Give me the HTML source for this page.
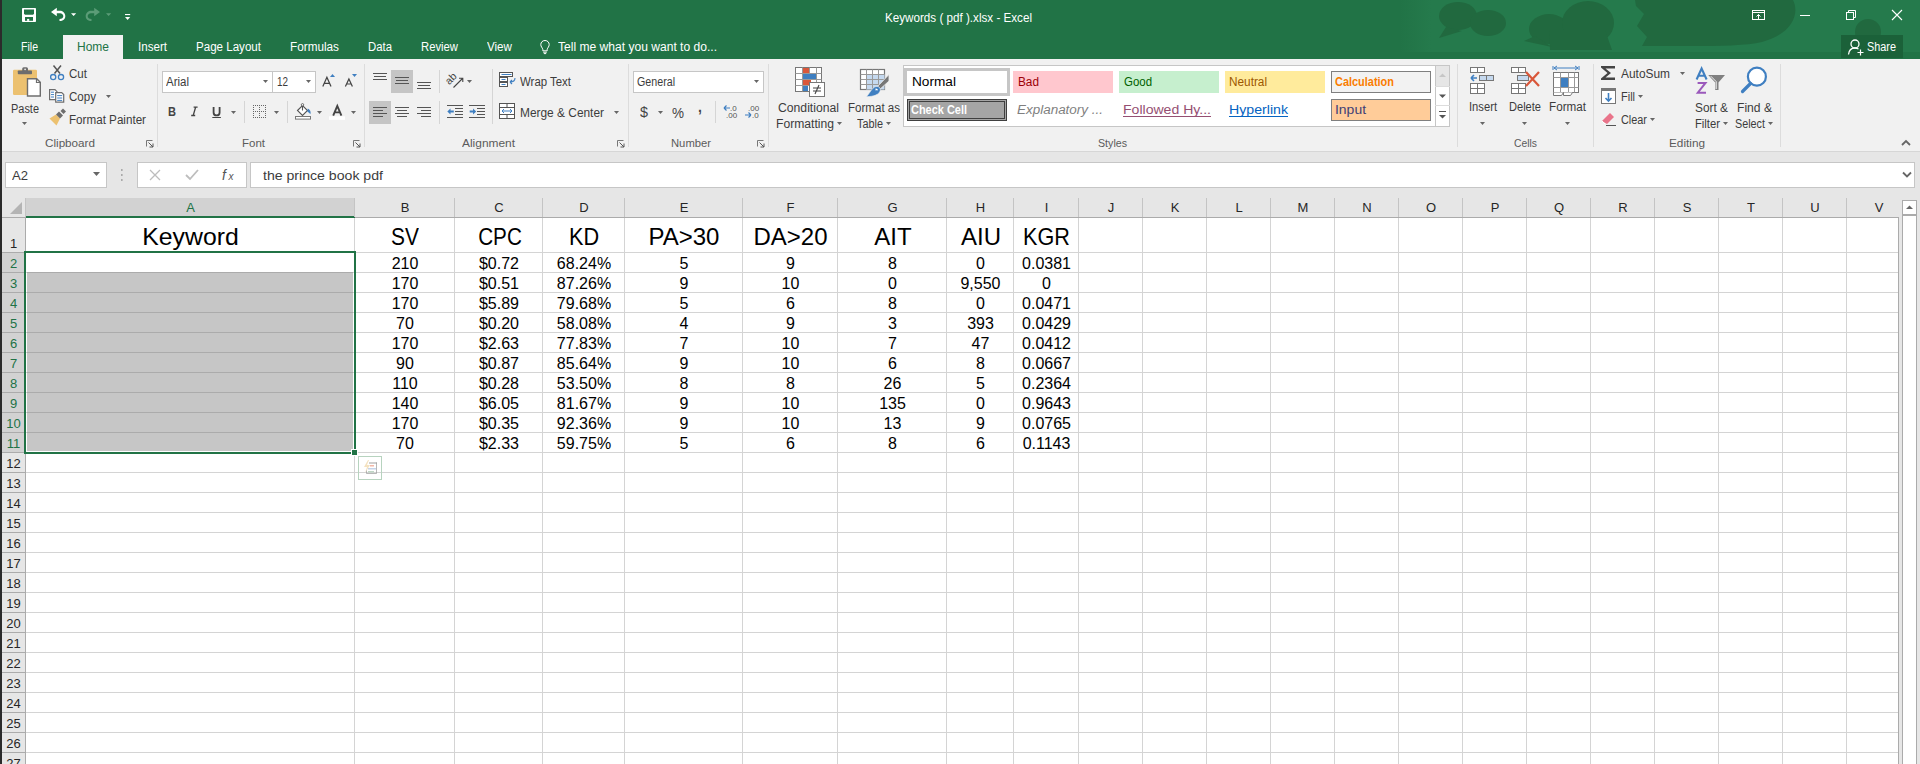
<!DOCTYPE html>
<html><head><meta charset="utf-8"><title>Keywords ( pdf ).xlsx - Excel</title>
<style>
*{margin:0;padding:0;box-sizing:border-box}
html,body{width:1920px;height:764px;overflow:hidden;background:#fff;font-family:"Liberation Sans",sans-serif}
.a{position:absolute}
svg.a{overflow:visible}
.t{position:absolute;height:0;line-height:0;white-space:nowrap}
.t span{display:inline-block;line-height:0;vertical-align:baseline}
</style></head><body>
<div class="a" style="left:0px;top:0px;width:1920px;height:59px;background:#217346"></div>
<svg class="a" style="left:0;top:0" width="1920" height="59" viewBox="0 0 1920 59"><defs><linearGradient id="tg" x1="0" x2="1" y1="0" y2="0"><stop offset="0" stop-color="#257a4c" stop-opacity="0"/><stop offset="0.06" stop-color="#257a4c" stop-opacity="1"/></linearGradient></defs><rect x="1400" y="0" width="520" height="52" fill="url(#tg)"/><g fill="#21693f"><ellipse cx="1458" cy="16" rx="19" ry="14"/><ellipse cx="1488" cy="23" rx="18" ry="13"/><path d="M1446 27L1439 38L1462 31z"/><ellipse cx="1549" cy="29" rx="20" ry="15"/><ellipse cx="1588" cy="23" rx="26" ry="22"/><path d="M1549 30H1605L1612 50H1550z"/><path d="M1535 36L1524 41L1552 47z"/><path d="M1635 0H1793C1800 14 1792 34 1762 42C1740 47 1700 46 1642 46L1647 37L1637 26L1644 14L1636 6z"/><circle cx="1868" cy="32" r="13"/></g></svg>
<div class="t" style="left:885.00px;top:18.00px;font-size:12px;color:#ffffff;transform:scaleX(0.9711);transform-origin:0 0;"><span>Keywords ( pdf ).xlsx - Excel</span></div>
<svg class="a" style="left:0px;top:0px;" width="140" height="30" viewBox="0 0 140 30"><rect x="22" y="8" width="14" height="14" rx="0.8" fill="#fff"/><path d="M24 9.6h10v4.2l-1 1H25l-1-1z" fill="#217346"/><rect x="25" y="17" width="8" height="3.8" fill="#217346"/><rect x="27.1" y="18.9" width="2.1" height="2" fill="#fff"/><path d="M51 12L56.8 7.8V10.8H60C63.2 10.8 65.3 13.4 65.3 16.2C65.3 19 63 21 59.5 21V19C62 19 63.3 17.8 63.3 16.2C63.3 14.6 62 13.2 60 13.2H56.8V16.2z" fill="#fff"/><path d="M71 13.2h5.2L73.6 16z" fill="#fff"/><path d="M100 12L94.2 7.8V10.8H91C87.8 10.8 85.7 13.4 85.7 16.2C85.7 19 88 21 91.5 21V19C89 19 87.7 17.8 87.7 16.2C87.7 14.6 89 13.2 91 13.2H94.2V16.2z" fill="#5b9c77"/><path d="M106 13.2h5.2L108.6 16z" fill="#5b9c77"/><rect x="125" y="14" width="5.2" height="1.1" fill="#fff"/><path d="M125 17h5.2L127.6 20z" fill="#fff"/></svg>
<svg class="a" style="left:1740px;top:0px;" width="180" height="30" viewBox="0 0 180 30"><rect x="12.5" y="10.5" width="12" height="9" fill="none" stroke="#fff" stroke-width="1"/><path d="M12.5 12.5h12" stroke="#fff" stroke-width="1"/><path d="M18.5 19V14.5M16.5 16.5l2-2 2 2" stroke="#fff" fill="none" stroke-width="1"/><path d="M60 15.5h10" stroke="#fff" stroke-width="1"/><rect x="106.5" y="12.5" width="7" height="7" fill="none" stroke="#fff"/><path d="M108.5 12.5v-2h7v7h-2" fill="none" stroke="#fff"/><path d="M152 10L162 20M162 10L152 20" stroke="#fff" stroke-width="1.1"/></svg>
<div class="a" style="left:1841px;top:35px;width:62px;height:23px;background:#1b6139"></div>
<svg class="a" style="left:1847px;top:38px;" width="18" height="18" viewBox="0 0 18 18"><circle cx="8" cy="6" r="4" fill="none" stroke="#fff" stroke-width="1.3"/><path d="M1.5 16.5C2 12 5 10 8 10C9.5 10 10.5 10.5 11.5 11" fill="none" stroke="#fff" stroke-width="1.3"/><path d="M13.5 11.5v6M10.5 14.5h6" stroke="#fff" stroke-width="1.2"/></svg>
<div class="t" style="left:1867.00px;top:47.00px;font-size:12px;color:#ffffff;transform:scaleX(0.9057);transform-origin:0 0;"><span>Share</span></div>
<div class="a" style="left:63px;top:35px;width:60px;height:24px;background:#f1f1f1"></div>
<div class="t" style="left:21.00px;top:47.00px;font-size:12px;color:#fff;transform:scaleX(0.8790);transform-origin:0 0;"><span>File</span></div>
<div class="t" style="left:77.00px;top:47.00px;font-size:12px;color:#217346;"><span>Home</span></div>
<div class="t" style="left:138.00px;top:47.00px;font-size:12px;color:#fff;transform:scaleX(0.9663);transform-origin:0 0;"><span>Insert</span></div>
<div class="t" style="left:196.00px;top:47.00px;font-size:12px;color:#fff;transform:scaleX(0.9645);transform-origin:0 0;"><span>Page Layout</span></div>
<div class="t" style="left:290.00px;top:47.00px;font-size:12px;color:#fff;transform:scaleX(0.9798);transform-origin:0 0;"><span>Formulas</span></div>
<div class="t" style="left:368.00px;top:47.00px;font-size:12px;color:#fff;transform:scaleX(0.9467);transform-origin:0 0;"><span>Data</span></div>
<div class="t" style="left:421.00px;top:47.00px;font-size:12px;color:#fff;transform:scaleX(0.9396);transform-origin:0 0;"><span>Review</span></div>
<div class="t" style="left:487.00px;top:47.00px;font-size:12px;color:#fff;transform:scaleX(0.9679);transform-origin:0 0;"><span>View</span></div>
<div class="t" style="left:558.00px;top:47.00px;font-size:12px;color:#fff;transform:scaleX(1.0058);transform-origin:0 0;"><span>Tell me what you want to do...</span></div>
<svg class="a" style="left:539px;top:39px;" width="12" height="16" viewBox="0 0 12 16"><path d="M6 1.5C3.5 1.5 1.8 3.3 1.8 5.6C1.8 7.6 3.3 8.6 3.8 10.3V11.8H8.2V10.3C8.7 8.6 10.2 7.6 10.2 5.6C10.2 3.3 8.5 1.5 6 1.5Z" fill="none" stroke="#fff" stroke-width="1"/><path d="M4.2 13.2h3.6M4.8 14.6h2.4" stroke="#fff" stroke-width="1"/></svg>
<div class="a" style="left:0px;top:59px;width:1920px;height:92px;background:#f1f1f1"></div>
<div class="a" style="left:0px;top:151px;width:1920px;height:1px;background:#d6d6d6"></div>
<div class="a" style="left:157px;top:64px;width:1px;height:83px;background:#dcdcdc"></div>
<div class="a" style="left:364px;top:64px;width:1px;height:83px;background:#dcdcdc"></div>
<div class="a" style="left:628px;top:64px;width:1px;height:83px;background:#dcdcdc"></div>
<div class="a" style="left:768px;top:64px;width:1px;height:83px;background:#dcdcdc"></div>
<div class="a" style="left:1457px;top:64px;width:1px;height:83px;background:#dcdcdc"></div>
<div class="a" style="left:1593px;top:64px;width:1px;height:83px;background:#dcdcdc"></div>
<div class="a" style="left:1780px;top:64px;width:1px;height:83px;background:#dcdcdc"></div>
<div class="t" style="left:45.00px;top:143.00px;font-size:11px;color:#5b5b5b;transform:scaleX(1.0620);transform-origin:0 0;"><span>Clipboard</span></div>
<div class="t" style="left:242.00px;top:143.00px;font-size:11px;color:#5b5b5b;transform:scaleX(1.0450);transform-origin:0 0;"><span>Font</span></div>
<div class="t" style="left:462.00px;top:143.00px;font-size:11px;color:#5b5b5b;transform:scaleX(1.0836);transform-origin:0 0;"><span>Alignment</span></div>
<div class="t" style="left:671.00px;top:143.00px;font-size:11px;color:#5b5b5b;transform:scaleX(1.0225);transform-origin:0 0;"><span>Number</span></div>
<div class="t" style="left:1098.00px;top:143.00px;font-size:11px;color:#5b5b5b;transform:scaleX(0.9683);transform-origin:0 0;"><span>Styles</span></div>
<div class="t" style="left:1514.00px;top:143.00px;font-size:11px;color:#5b5b5b;transform:scaleX(0.9407);transform-origin:0 0;"><span>Cells</span></div>
<div class="t" style="left:1669.00px;top:143.00px;font-size:11px;color:#5b5b5b;transform:scaleX(1.0705);transform-origin:0 0;"><span>Editing</span></div>
<svg class="a" style="left:146px;top:140px;" width="8" height="8" viewBox="0 0 8 8"><path d="M0.5 0.5h6M0.5 0.5v6" stroke="#777" fill="none"/><path d="M2.5 2.5L7 7M7 3.5V7H3.5" stroke="#555" fill="none"/></svg>
<svg class="a" style="left:353px;top:140px;" width="8" height="8" viewBox="0 0 8 8"><path d="M0.5 0.5h6M0.5 0.5v6" stroke="#777" fill="none"/><path d="M2.5 2.5L7 7M7 3.5V7H3.5" stroke="#555" fill="none"/></svg>
<svg class="a" style="left:617px;top:140px;" width="8" height="8" viewBox="0 0 8 8"><path d="M0.5 0.5h6M0.5 0.5v6" stroke="#777" fill="none"/><path d="M2.5 2.5L7 7M7 3.5V7H3.5" stroke="#555" fill="none"/></svg>
<svg class="a" style="left:757px;top:140px;" width="8" height="8" viewBox="0 0 8 8"><path d="M0.5 0.5h6M0.5 0.5v6" stroke="#777" fill="none"/><path d="M2.5 2.5L7 7M7 3.5V7H3.5" stroke="#555" fill="none"/></svg>
<svg class="a" style="left:1901px;top:139px;" width="10" height="7" viewBox="0 0 10 7"><path d="M1 6L5 2L9 6" fill="none" stroke="#666" stroke-width="1.8"/></svg>
<svg class="a" style="left:0px;top:60px;" width="70" height="70" viewBox="0 0 70 70"><rect x="13" y="9.8" width="24" height="25.2" rx="1.2" fill="#ecc170"/><rect x="17.8" y="10.5" width="14.2" height="3.8" rx="0.8" fill="#6d6d6d"/><rect x="22.2" y="7.2" width="5.8" height="4.5" rx="1.5" fill="#6d6d6d"/><circle cx="25.1" cy="9.3" r="0.9" fill="#eee"/><path d="M27.5 18.7h9.2l3.6 3.6v13.7H27.5z" fill="#fff" stroke="#6d6d6d" stroke-width="1.4"/><path d="M36.5 18.7v3.8h3.8" fill="none" stroke="#6d6d6d" stroke-width="1.2"/></svg>
<div class="t" style="left:11.00px;top:109.00px;font-size:12px;color:#3c3c3c;transform:scaleX(0.9123);transform-origin:0 0;"><span>Paste</span></div>
<svg class="a" style="left:22.0px;top:122px;" width="5" height="3" viewBox="0 0 5 3"><path d="M0 0h5L2.5 3z" fill="#666"/></svg>
<svg class="a" style="left:0px;top:60px;" width="70" height="70" viewBox="0 0 70 70"><path d="M53.5 5.5L60 13.5M61 5.5L54.5 13.5" stroke="#555" stroke-width="1.5"/><circle cx="53.2" cy="17.1" r="2.6" fill="none" stroke="#3f7fc1" stroke-width="1.3"/><circle cx="61" cy="17.1" r="2.6" fill="none" stroke="#3f7fc1" stroke-width="1.3"/></svg>
<div class="t" style="left:69.00px;top:74.00px;font-size:12px;color:#3c3c3c;transform:scaleX(0.9641);transform-origin:0 0;"><span>Cut</span></div>
<svg class="a" style="left:0px;top:60px;" width="70" height="70" viewBox="0 0 70 70"><path d="M49.6 29.7h5.4l2 2v8H49.6z" fill="#fff" stroke="#6d6d6d" stroke-width="1.2"/><path d="M55.7 32.6h6l2 2v7.6h-8z" fill="#fff" stroke="#6d6d6d" stroke-width="1.2"/><path d="M51 32.2h3M51 34.6h3M51 37h3M57.2 35.6h5M57.2 38h5M57.2 40.4h5" stroke="#3f7fc1" stroke-width="1"/></svg>
<div class="t" style="left:69.00px;top:97.00px;font-size:12px;color:#3c3c3c;transform:scaleX(0.9639);transform-origin:0 0;"><span>Copy</span></div>
<svg class="a" style="left:106.0px;top:95px;" width="5" height="3" viewBox="0 0 5 3"><path d="M0 0h5L2.5 3z" fill="#666"/></svg>
<svg class="a" style="left:0px;top:60px;" width="70" height="70" viewBox="0 0 70 70"><path d="M49.5 58.5L56 54.5L60 58.5L56.5 65.5z" fill="#ecc170"/><path d="M56 54.5L59 51.5L63 55.5L60 58.5z" fill="#6d6d6d"/><path d="M60.5 51L63 48.5L66 51.5L63.5 54z" fill="#6d6d6d"/></svg>
<div class="t" style="left:69.00px;top:120.00px;font-size:12px;color:#3c3c3c;transform:scaleX(0.9703);transform-origin:0 0;"><span>Format Painter</span></div>
<div class="a" style="left:162px;top:71px;width:111px;height:22px;background:#fff;border:1px solid #c6c6c6"></div>
<div class="a" style="left:272px;top:71px;width:44px;height:22px;background:#fff;border:1px solid #c6c6c6"></div>
<div class="t" style="left:166.00px;top:82.00px;font-size:12px;color:#3c3c3c;transform:scaleX(0.9579);transform-origin:0 0;"><span>Arial</span></div>
<svg class="a" style="left:263.0px;top:80px;" width="5" height="3" viewBox="0 0 5 3"><path d="M0 0h5L2.5 3z" fill="#666"/></svg>
<div class="t" style="left:277.00px;top:82.00px;font-size:12px;color:#3c3c3c;transform:scaleX(0.8240);transform-origin:0 0;"><span>12</span></div>
<svg class="a" style="left:306.0px;top:80px;" width="5" height="3" viewBox="0 0 5 3"><path d="M0 0h5L2.5 3z" fill="#666"/></svg>
<svg class="a" style="left:0px;top:0px;" width="400" height="130" viewBox="0 0 400 130"><path d="M322.8 86.6L326.9 77.2L331 86.6M324.2 83.4H329.6" fill="none" stroke="#444" stroke-width="1.25"/><path d="M330 77h5l-2.5-3z" fill="#3f7fc1"/><path d="M345.4 86.6L348.9 78.9L352.4 86.6M346.6 84H351.2" fill="none" stroke="#444" stroke-width="1.2"/><path d="M352 74h5l-2.5 3z" fill="#3f7fc1"/><g fill="#666"><rect x="253" y="105" width="1" height="1"/><rect x="253" y="117" width="1" height="1"/><rect x="255" y="105" width="1" height="1"/><rect x="255" y="117" width="1" height="1"/><rect x="257" y="105" width="1" height="1"/><rect x="257" y="117" width="1" height="1"/><rect x="259" y="105" width="1" height="1"/><rect x="259" y="117" width="1" height="1"/><rect x="261" y="105" width="1" height="1"/><rect x="261" y="117" width="1" height="1"/><rect x="263" y="105" width="1" height="1"/><rect x="263" y="117" width="1" height="1"/><rect x="265" y="105" width="1" height="1"/><rect x="265" y="117" width="1" height="1"/><rect x="253" y="107" width="1" height="1"/><rect x="265" y="107" width="1" height="1"/><rect x="253" y="109" width="1" height="1"/><rect x="265" y="109" width="1" height="1"/><rect x="253" y="111" width="1" height="1"/><rect x="265" y="111" width="1" height="1"/><rect x="253" y="113" width="1" height="1"/><rect x="265" y="113" width="1" height="1"/><rect x="253" y="115" width="1" height="1"/><rect x="265" y="115" width="1" height="1"/><rect x="255" y="111" width="1" height="1"/><rect x="257" y="111" width="1" height="1"/><rect x="259" y="111" width="1" height="1"/><rect x="261" y="111" width="1" height="1"/><rect x="263" y="111" width="1" height="1"/><rect x="259" y="107" width="1" height="1"/><rect x="259" y="109" width="1" height="1"/><rect x="259" y="111" width="1" height="1"/><rect x="259" y="113" width="1" height="1"/><rect x="259" y="115" width="1" height="1"/></g><path d="M297.5 110.5L302.5 105.5L307.5 110.5L302.5 115.5z" fill="#fff" stroke="#555" stroke-width="1.1"/><path d="M302.5 110.5V104.5" stroke="#555" stroke-width="1.1"/><circle cx="302.5" cy="104.8" r="1.2" fill="#fff" stroke="#555" stroke-width="0.9"/><path d="M307.8 108.6c2.2 1 3.4 3 2.6 5.6c-0.8-1.2-1.8-2-3-2.4z" fill="#3f7fc1"/><rect x="295.5" y="116.5" width="15" height="2.6" fill="#fff" stroke="#777"/><path d="M333.2 115.6L337.3 106L341.4 115.6M334.6 112.4H340" fill="none" stroke="#444" stroke-width="1.9"/><rect x="329" y="116.3" width="16" height="3.5" fill="#fff"/><path d="M191.2 115.5H195.2M193.6 107.2H197.6M195.6 107.2L193.2 115.5" fill="none" stroke="#444" stroke-width="1.3"/><path d="M213.6 107V112.4C213.6 114.4 214.9 115.4 216.6 115.4C218.3 115.4 219.6 114.4 219.6 112.4V107" fill="none" stroke="#444" stroke-width="1.8"/><rect x="212.3" y="117" width="8.6" height="1" fill="#444"/></svg>
<div class="t" style="left:168.00px;top:112.00px;font-size:13px;color:#444;font-weight:bold;transform:scaleX(0.8520);transform-origin:0 0;"><span>B</span></div>
<svg class="a" style="left:231.0px;top:111px;" width="5" height="3" viewBox="0 0 5 3"><path d="M0 0h5L2.5 3z" fill="#666"/></svg>
<div class="a" style="left:244px;top:101px;width:1px;height:22px;background:#d5d5d5"></div>
<svg class="a" style="left:274.0px;top:111px;" width="5" height="3" viewBox="0 0 5 3"><path d="M0 0h5L2.5 3z" fill="#666"/></svg>
<div class="a" style="left:287px;top:101px;width:1px;height:22px;background:#d5d5d5"></div>
<svg class="a" style="left:317.0px;top:111px;" width="5" height="3" viewBox="0 0 5 3"><path d="M0 0h5L2.5 3z" fill="#666"/></svg>
<svg class="a" style="left:351.0px;top:111px;" width="5" height="3" viewBox="0 0 5 3"><path d="M0 0h5L2.5 3z" fill="#666"/></svg>
<div class="a" style="left:391px;top:70px;width:22px;height:23px;background:#c5c5c5"></div>
<div class="a" style="left:369px;top:101px;width:22px;height:23px;background:#c5c5c5"></div>
<svg class="a" style="left:0px;top:0px;" width="500" height="130" viewBox="0 0 500 130"><g fill="#555"><rect x="373" y="73" width="14" height="1" /><rect x="374" y="76" width="12" height="1" /><rect x="373" y="79" width="14" height="1" /><rect x="395" y="77" width="14" height="1" /><rect x="396" y="80" width="12" height="1" /><rect x="395" y="83" width="14" height="1" /><rect x="417" y="82" width="14" height="1" /><rect x="418" y="85" width="12" height="1" /><rect x="417" y="88" width="14" height="1" /><rect x="373" y="107" width="14" height="1" /><rect x="373" y="110" width="10" height="1" /><rect x="373" y="113" width="14" height="1" /><rect x="373" y="116" width="10" height="1" /><rect x="395" y="107" width="14" height="1" /><rect x="397" y="110" width="10" height="1" /><rect x="395" y="113" width="14" height="1" /><rect x="397" y="116" width="10" height="1" /><rect x="417" y="107" width="14" height="1" /><rect x="421" y="110" width="10" height="1" /><rect x="417" y="113" width="14" height="1" /><rect x="421" y="116" width="10" height="1" /><rect x="447" y="105" width="16" height="1" /><rect x="447" y="117" width="16" height="1" /><rect x="455" y="108" width="8" height="1" /><rect x="455" y="111" width="8" height="1" /><rect x="455" y="114" width="8" height="1" /><rect x="469" y="105" width="16" height="1" /><rect x="469" y="117" width="16" height="1" /><rect x="477" y="108" width="8" height="1" /><rect x="477" y="111" width="8" height="1" /><rect x="477" y="114" width="8" height="1" /></g><path d="M447.3 111.5L450.5 108.5V110.6H453.8V112.4H450.5V114.5z" fill="#3f7fc1"/><path d="M476.2 111.5L473 108.5V110.6H469.7V112.4H473V114.5z" fill="#3f7fc1"/><text x="0" y="0" font-size="10.5" fill="#444" font-family="Liberation Sans" transform="translate(449.2 85.2) rotate(-45)">ab</text><path d="M453.5 87.5L462.5 78.5M459 78.2h3.8v3.8" fill="none" stroke="#444" stroke-width="1.1"/></svg>
<div class="a" style="left:439px;top:70px;width:1px;height:23px;background:#d5d5d5"></div>
<div class="a" style="left:439px;top:101px;width:1px;height:23px;background:#d5d5d5"></div>
<svg class="a" style="left:467.0px;top:80px;" width="5" height="3" viewBox="0 0 5 3"><path d="M0 0h5L2.5 3z" fill="#666"/></svg>
<div class="a" style="left:492px;top:69px;width:1px;height:55px;background:#d5d5d5"></div>
<svg class="a" style="left:499px;top:72px;" width="18" height="17" viewBox="0 0 18 17"><rect x="0.5" y="0.5" width="13" height="4" fill="#fff" stroke="#555"/><rect x="0.5" y="5.5" width="8" height="4" fill="#fff" stroke="#555"/><rect x="0.5" y="10.5" width="8" height="4" fill="#fff" stroke="#555"/><path d="M2.5 2.5h10M2.5 7.5h4M2.5 12.5h4" stroke="#3f7fc1"/><path d="M16 6c0 3-2 4-5 4M11 10l2-2M11 10l2 2" stroke="#3f7fc1" fill="none" stroke-width="1.1"/></svg>
<div class="t" style="left:520.00px;top:82.00px;font-size:12px;color:#3c3c3c;transform:scaleX(0.9518);transform-origin:0 0;"><span>Wrap Text</span></div>
<svg class="a" style="left:499px;top:103px;" width="17" height="16" viewBox="0 0 17 16"><rect x="0.5" y="0.5" width="15" height="15" fill="#fff" stroke="#555"/><path d="M0.5 4.5h15M0.5 11.5h15M8 0.5v4M8 11.5v4" stroke="#555"/><path d="M3 8h10M3 8l2-2M3 8l2 2M13 8l-2-2M13 8l-2 2" stroke="#3f7fc1" fill="none"/></svg>
<div class="t" style="left:520.00px;top:113.00px;font-size:12px;color:#3c3c3c;transform:scaleX(0.9917);transform-origin:0 0;"><span>Merge &amp; Center</span></div>
<svg class="a" style="left:614.0px;top:111px;" width="5" height="3" viewBox="0 0 5 3"><path d="M0 0h5L2.5 3z" fill="#666"/></svg>
<div class="a" style="left:633px;top:71px;width:131px;height:22px;background:#fff;border:1px solid #c6c6c6"></div>
<div class="t" style="left:637.00px;top:82.00px;font-size:12px;color:#3c3c3c;transform:scaleX(0.8901);transform-origin:0 0;"><span>General</span></div>
<svg class="a" style="left:754.0px;top:80px;" width="5" height="3" viewBox="0 0 5 3"><path d="M0 0h5L2.5 3z" fill="#666"/></svg>
<div class="t" style="left:640.00px;top:112.00px;font-size:15px;color:#444;transform:scaleX(0.9592);transform-origin:0 0;"><span>$</span></div>
<svg class="a" style="left:658.0px;top:111px;" width="5" height="3" viewBox="0 0 5 3"><path d="M0 0h5L2.5 3z" fill="#666"/></svg>
<div class="t" style="left:672.00px;top:113.00px;font-size:14px;color:#444;transform:scaleX(0.9639);transform-origin:0 0;"><span>%</span></div>
<div class="t" style="left:698.00px;top:107.00px;font-size:14px;color:#444;font-weight:bold;"><span>,</span></div>
<div class="a" style="left:715px;top:101px;width:1px;height:22px;background:#d5d5d5"></div>
<svg class="a" style="left:723px;top:104px;" width="16" height="15" viewBox="0 0 16 15"><text x="7" y="6.5" font-size="8" fill="#555" font-family="Liberation Sans">.0</text><text x="3" y="14" font-size="8" fill="#555" font-family="Liberation Sans">.00</text><path d="M1 4h6M1 4l2.5-2.5M1 4l2.5 2.5" stroke="#3f7fc1" fill="none" stroke-width="1.2"/></svg>
<svg class="a" style="left:744px;top:104px;" width="16" height="15" viewBox="0 0 16 15"><text x="4" y="6.5" font-size="8" fill="#555" font-family="Liberation Sans">.00</text><text x="8" y="14" font-size="8" fill="#555" font-family="Liberation Sans">.0</text><path d="M1 11h6M7 11l-2.5-2.5M7 11l-2.5 2.5" stroke="#3f7fc1" fill="none" stroke-width="1.2"/></svg>
<svg class="a" style="left:794px;top:66px;" width="32" height="32" viewBox="0 0 32 32"><g fill="#fff" stroke="#777" stroke-width="1"><rect x="1.5" y="1.5" width="26" height="24"/></g><path d="M1.5 7.5h26M1.5 13.5h26M1.5 19.5h26M8.5 1.5v24M15.5 1.5v24M22.5 1.5v24" stroke="#999"/><rect x="9" y="2" width="6" height="5" fill="#d9573a"/><rect x="9" y="8" width="13" height="5" fill="#3f7fc1"/><rect x="9" y="14" width="8" height="5" fill="#d9573a"/><rect x="9" y="20" width="5" height="5" fill="#3f7fc1"/><rect x="15.5" y="16.5" width="15" height="14" fill="#fff" stroke="#777"/><path d="M19 22h8M19 25h8M25 19l-4 9" stroke="#444" stroke-width="1.1"/></svg>
<div class="t" style="left:778.00px;top:108.00px;font-size:12px;color:#3c3c3c;transform:scaleX(1.0160);transform-origin:0 0;"><span>Conditional</span></div>
<div class="t" style="left:776.00px;top:124.00px;font-size:12px;color:#3c3c3c;transform:scaleX(1.0113);transform-origin:0 0;"><span>Formatting</span></div>
<svg class="a" style="left:837.0px;top:122px;" width="5" height="3" viewBox="0 0 5 3"><path d="M0 0h5L2.5 3z" fill="#666"/></svg>
<svg class="a" style="left:0px;top:0px;" width="900" height="100" viewBox="0 0 900 100"><rect x="860.5" y="69.5" width="24" height="20" fill="#fff" stroke="#777" stroke-width="1.2"/><rect x="866" y="74.5" width="18.5" height="15" fill="#c5d9ef"/><path d="M860.5 74.5h24M860.5 79.5h24M860.5 84.5h24M866.5 69.5v20M872.5 69.5v20M878.5 69.5v20" stroke="#999" stroke-width="1"/><path d="M889 74.5V81L880.2 89L877.8 86.2z" fill="#777" stroke="#f1f1f1" stroke-width="0.8"/><path d="M876 86.5c2.8-0.6 5 1.8 4.2 4.3c-1 3.5-6 5.8-13.8 5.9c3.5-3.6 5.8-9.4 9.6-10.2z" fill="#3f7fc1" stroke="#f1f1f1" stroke-width="0.6"/><path d="M875.6 88.6c1.2-0.2 2.6 0.8 2.2 2c-0.6-0.4-1.4-0.5-2.4-0.2z" fill="#fff"/></svg>
<div class="t" style="left:848.00px;top:108.00px;font-size:12px;color:#3c3c3c;transform:scaleX(0.9628);transform-origin:0 0;"><span>Format as</span></div>
<div class="t" style="left:857.00px;top:124.00px;font-size:12px;color:#3c3c3c;transform:scaleX(0.9062);transform-origin:0 0;"><span>Table</span></div>
<svg class="a" style="left:886.0px;top:122px;" width="5" height="3" viewBox="0 0 5 3"><path d="M0 0h5L2.5 3z" fill="#666"/></svg>
<div class="a" style="left:903px;top:65px;width:547px;height:62px;background:#fff;border:1px solid #c6c6c6"></div>
<div class="a" style="left:904px;top:68px;width:106px;height:28px;background:#c6c6c6"></div>
<div class="a" style="left:907px;top:71px;width:100px;height:22px;background:#fff"></div>
<div class="t" style="left:912.00px;top:82.00px;font-size:12px;color:#000;transform:scaleX(1.1378);transform-origin:0 0;"><span>Normal</span></div>
<div class="a" style="left:1013px;top:71px;width:100px;height:22px;background:#ffc7ce"></div>
<div class="t" style="left:1018.00px;top:82.00px;font-size:12px;color:#9c0006;transform:scaleX(0.9836);transform-origin:0 0;"><span>Bad</span></div>
<div class="a" style="left:1119px;top:71px;width:100px;height:22px;background:#c6efce"></div>
<div class="t" style="left:1124.00px;top:82.00px;font-size:12px;color:#006100;transform:scaleX(0.9537);transform-origin:0 0;"><span>Good</span></div>
<div class="a" style="left:1225px;top:71px;width:100px;height:22px;background:#ffeb9c"></div>
<div class="t" style="left:1229.00px;top:82.00px;font-size:12px;color:#9c5700;transform:scaleX(0.9824);transform-origin:0 0;"><span>Neutral</span></div>
<div class="a" style="left:1331px;top:71px;width:100px;height:22px;background:#f2f2f2;border:1px solid #7f7f7f"></div>
<div class="t" style="left:1335.00px;top:82.00px;font-size:12px;color:#fa7d00;font-weight:bold;transform:scaleX(0.9122);transform-origin:0 0;"><span>Calculation</span></div>
<div class="a" style="left:907px;top:99px;width:100px;height:22px;background:#a5a5a5;border:3px double #3f3f3f"></div>
<div class="t" style="left:911.00px;top:110.00px;font-size:12px;color:#fff;font-weight:bold;transform:scaleX(0.9126);transform-origin:0 0;"><span>Check Cell</span></div>
<div class="t" style="left:1017.00px;top:110.00px;font-size:12px;color:#7f7f7f;font-style:italic;transform:scaleX(1.1211);transform-origin:0 0;"><span>Explanatory ...</span></div>
<div class="t" style="left:1123.00px;top:110.00px;font-size:12px;color:#954f72;transform:scaleX(1.1711);transform-origin:0 0;"><span>Followed Hy...</span></div>
<div class="a" style="left:1123px;top:116px;width:88px;height:1px;background:#954f72"></div>
<div class="t" style="left:1229.00px;top:110.00px;font-size:12px;color:#0563c1;transform:scaleX(1.1791);transform-origin:0 0;"><span>Hyperlink</span></div>
<div class="a" style="left:1229px;top:116px;width:59px;height:1px;background:#0563c1"></div>
<div class="a" style="left:1331px;top:99px;width:100px;height:22px;background:#ffcc99;border:1px solid #7f7f7f"></div>
<div class="t" style="left:1335.00px;top:110.00px;font-size:12px;color:#3f3f76;transform:scaleX(1.1615);transform-origin:0 0;"><span>Input</span></div>
<div class="a" style="left:1435px;top:65px;width:15px;height:62px;background:#fff;border:1px solid #c6c6c6"></div>
<div class="a" style="left:1436px;top:66px;width:13px;height:20px;background:#e6e6e6"></div>
<div class="a" style="left:1435px;top:86px;width:15px;height:1px;background:#dcdcdc"></div>
<div class="a" style="left:1435px;top:105px;width:15px;height:1px;background:#dcdcdc"></div>
<svg class="a" style="left:1439px;top:73px;" width="7" height="4" viewBox="0 0 7 4"><path d="M0 4h7L3.5 0.5z" fill="#c6c6c6"/></svg>
<svg class="a" style="left:1439px;top:94px;" width="7" height="4" viewBox="0 0 7 4"><path d="M0 0.5h7L3.5 4z" fill="#555"/></svg>
<svg class="a" style="left:1439px;top:111px;" width="7" height="9" viewBox="0 0 7 9"><rect x="0" y="0" width="7" height="1" fill="#555"/><path d="M0 4h7L3.5 7.5z" fill="#555"/></svg>
<svg class="a" style="left:1468px;top:66px;" width="28" height="28" viewBox="0 0 28 28"><g fill="#fff" stroke="#777"><rect x="2.5" y="1.5" width="14" height="5"/><path d="M9.5 1.5v5"/><rect x="2.5" y="17.5" width="14" height="10"/><path d="M9.5 17.5v10M2.5 22.5h14"/></g><rect x="11.5" y="9.5" width="14" height="5" fill="#c5d9ef" stroke="#777"/><path d="M18.5 9.5v5" stroke="#777"/><path d="M3 12h6M3 12l3-3M3 12l3 3" stroke="#3f7fc1" stroke-width="1.6" fill="none"/></svg>
<div class="t" style="left:1469.00px;top:107.00px;font-size:12px;color:#3c3c3c;transform:scaleX(0.9330);transform-origin:0 0;"><span>Insert</span></div>
<svg class="a" style="left:1480.0px;top:122px;" width="5" height="3" viewBox="0 0 5 3"><path d="M0 0h5L2.5 3z" fill="#666"/></svg>
<svg class="a" style="left:1509px;top:66px;" width="34" height="28" viewBox="0 0 34 28"><g fill="#fff" stroke="#777"><rect x="2.5" y="1.5" width="14" height="5"/><path d="M9.5 1.5v5"/><rect x="2.5" y="17.5" width="14" height="10"/><path d="M9.5 17.5v10M2.5 22.5h14"/></g><rect x="8.5" y="9.5" width="11" height="5" fill="#c5d9ef" stroke="#777"/><path d="M17 6L30 20M30 6L17 20" stroke="#d9573a" stroke-width="2.2"/></svg>
<div class="t" style="left:1509.00px;top:107.00px;font-size:12px;color:#3c3c3c;transform:scaleX(0.9225);transform-origin:0 0;"><span>Delete</span></div>
<svg class="a" style="left:1522.0px;top:122px;" width="5" height="3" viewBox="0 0 5 3"><path d="M0 0h5L2.5 3z" fill="#666"/></svg>
<svg class="a" style="left:1551px;top:65px;" width="32" height="33" viewBox="0 0 32 33"><path d="M2 1v4M28 1v4M3 3h24M3 3l3-2M3 3l3 2M27 3l-3-2M27 3l-3 2" stroke="#3f7fc1" fill="none"/><rect x="2.5" y="7.5" width="25" height="20" fill="#fff" stroke="#777"/><path d="M2.5 12.5h25M2.5 22.5h25M9.5 7.5v20M17.5 7.5v20M23.5 7.5v20" stroke="#999"/><rect x="10" y="13" width="7" height="9" fill="#3f7fc1"/><path d="M2.5 27.5v3h8l2-3M12.5 27.5v3h7l2-3" fill="#fff" stroke="#777"/></svg>
<div class="t" style="left:1549.00px;top:107.00px;font-size:12px;color:#3c3c3c;transform:scaleX(0.9737);transform-origin:0 0;"><span>Format</span></div>
<svg class="a" style="left:1565.0px;top:122px;" width="5" height="3" viewBox="0 0 5 3"><path d="M0 0h5L2.5 3z" fill="#666"/></svg>
<svg class="a" style="left:1600px;top:65px;" width="17" height="16" viewBox="0 0 17 16"><path d="M1 1h14v2.5H5.5L11 8L5.5 12.5H15V15H1v-1.5L7.5 8L1 2.5z" fill="#444"/></svg>
<div class="t" style="left:1621.00px;top:74.00px;font-size:12px;color:#3c3c3c;transform:scaleX(0.9927);transform-origin:0 0;"><span>AutoSum</span></div>
<svg class="a" style="left:1680.0px;top:72px;" width="5" height="3" viewBox="0 0 5 3"><path d="M0 0h5L2.5 3z" fill="#666"/></svg>
<svg class="a" style="left:1601px;top:88px;" width="16" height="17" viewBox="0 0 16 17"><rect x="0.5" y="0.5" width="14" height="15" fill="#fff" stroke="#777"/><rect x="0.5" y="0.5" width="14" height="2.5" fill="#777"/><path d="M7.5 5v8M4.5 10l3 3 3-3" stroke="#3f7fc1" stroke-width="1.6" fill="none"/></svg>
<div class="t" style="left:1621.00px;top:97.00px;font-size:12px;color:#3c3c3c;transform:scaleX(0.9132);transform-origin:0 0;"><span>Fill</span></div>
<svg class="a" style="left:1638.0px;top:95px;" width="5" height="3" viewBox="0 0 5 3"><path d="M0 0h5L2.5 3z" fill="#666"/></svg>
<svg class="a" style="left:1601px;top:111px;" width="16" height="15" viewBox="0 0 16 15"><path d="M1 10L9 2L13 6L6 13z" fill="#e9748a"/><path d="M1 10L4 13" stroke="#fff"/><path d="M5 14.5h10" stroke="#555"/></svg>
<div class="t" style="left:1621.00px;top:120.00px;font-size:12px;color:#3c3c3c;transform:scaleX(0.9066);transform-origin:0 0;"><span>Clear</span></div>
<svg class="a" style="left:1650.0px;top:118px;" width="5" height="3" viewBox="0 0 5 3"><path d="M0 0h5L2.5 3z" fill="#666"/></svg>
<svg class="a" style="left:0px;top:0px;" width="1800" height="100" viewBox="0 0 1800 100"><path d="M1696.6 79.5L1701.6 68.5L1706.6 79.5M1698.4 75.8H1704.8" fill="none" stroke="#3f7fc1" stroke-width="2.1"/><path d="M1697.6 82.9H1705.5L1697.8 92.7H1706" fill="none" stroke="#9b59bb" stroke-width="2"/><path d="M1708.2 75H1725L1718.5 82.6V90H1715.2V82.6z" fill="#808080"/><path d="M1710.8 76.2L1716.2 81.6V89" fill="none" stroke="#fff" stroke-width="0.9"/></svg>
<div class="t" style="left:1695.00px;top:108.00px;font-size:12px;color:#3c3c3c;transform:scaleX(0.9895);transform-origin:0 0;"><span>Sort &amp;</span></div>
<div class="t" style="left:1695.00px;top:124.00px;font-size:12px;color:#3c3c3c;transform:scaleX(0.9374);transform-origin:0 0;"><span>Filter</span></div>
<svg class="a" style="left:1723.0px;top:122px;" width="5" height="3" viewBox="0 0 5 3"><path d="M0 0h5L2.5 3z" fill="#666"/></svg>
<svg class="a" style="left:0px;top:0px;" width="1800" height="100" viewBox="0 0 1800 100"><circle cx="1756.9" cy="76.7" r="9" fill="#fff" stroke="#3f7fc1" stroke-width="2.2"/><path d="M1750.5 83.5L1742.5 91.5" stroke="#3f7fc1" stroke-width="3.2" stroke-linecap="round"/></svg>
<div class="t" style="left:1737.00px;top:108.00px;font-size:12px;color:#3c3c3c;transform:scaleX(1.0092);transform-origin:0 0;"><span>Find &amp;</span></div>
<div class="t" style="left:1735.00px;top:124.00px;font-size:12px;color:#3c3c3c;transform:scaleX(0.8996);transform-origin:0 0;"><span>Select</span></div>
<svg class="a" style="left:1768.0px;top:122px;" width="5" height="3" viewBox="0 0 5 3"><path d="M0 0h5L2.5 3z" fill="#666"/></svg>
<div class="a" style="left:0px;top:152px;width:1920px;height:46px;background:#e6e6e6"></div>
<div class="a" style="left:5px;top:162px;width:102px;height:26px;background:#fff;border:1px solid #c6c6c6"></div>
<div class="t" style="left:12.00px;top:176.00px;font-size:12px;color:#3c3c3c;transform:scaleX(1.0899);transform-origin:0 0;"><span>A2</span></div>
<svg class="a" style="left:93px;top:172px;" width="7" height="4" viewBox="0 0 7 4"><path d="M0 0h7L3.5 4z" fill="#666"/></svg>
<svg class="a" style="left:120px;top:165px;" width="4" height="20" viewBox="0 0 4 20"><rect x="1" y="4" width="1.6" height="2" fill="#aaa"/><rect x="1" y="9" width="1.6" height="2" fill="#aaa"/><rect x="1" y="14" width="1.6" height="2" fill="#aaa"/></svg>
<div class="a" style="left:137px;top:162px;width:110px;height:26px;background:#fff;border:1px solid #c6c6c6"></div>
<svg class="a" style="left:149px;top:169px;" width="12" height="12" viewBox="0 0 12 12"><path d="M1 1L11 11M11 1L1 11" stroke="#bdbdbd" stroke-width="1.3"/></svg>
<svg class="a" style="left:185px;top:169px;" width="14" height="12" viewBox="0 0 14 12"><path d="M1 6L5 10L13 1" fill="none" stroke="#bdbdbd" stroke-width="1.8"/></svg>
<div class="t" style="left:222.00px;top:175.00px;font-size:14px;color:#555;font-style:italic;font-family:"Liberation Serif",serif;"><span>f</span></div>
<div class="t" style="left:228.41px;top:177.00px;font-size:10px;color:#555;font-style:italic;font-family:"Liberation Serif",serif;"><span>x</span></div>
<div class="a" style="left:250px;top:162px;width:1665px;height:26px;background:#fff;border:1px solid #c6c6c6"></div>
<div class="t" style="left:263.00px;top:176.00px;font-size:12px;color:#3c3c3c;transform:scaleX(1.1753);transform-origin:0 0;"><span>the prince book pdf</span></div>
<svg class="a" style="left:1902px;top:171px;" width="10" height="7" viewBox="0 0 10 7"><path d="M1 1.5L5 5.5L9 1.5" fill="none" stroke="#666" stroke-width="1.8"/></svg>
<div class="a" style="left:2px;top:198px;width:1918px;height:566px;background:#e6e6e6"></div>
<div class="a" style="left:26px;top:218px;width:1872px;height:546px;background:#fff"></div>
<div class="a" style="left:25px;top:198px;width:329px;height:18px;background:#d2d2d2"></div>
<svg class="a" style="left:10px;top:202px;" width="13" height="13" viewBox="0 0 13 13"><path d="M12 0V12H0z" fill="#b4b4b4"/></svg>
<div class="a" style="left:2px;top:217px;width:23px;height:1px;background:#ababab"></div>
<div class="a" style="left:25px;top:217px;width:1874px;height:1px;background:#ababab"></div>
<div class="a" style="left:25px;top:216px;width:330px;height:2px;background:#217346"></div>
<div class="a" style="left:354px;top:198px;width:1px;height:19px;background:#c4c4c4"></div>
<div class="t" style="left:26px;top:208px;width:329px;text-align:center;font-size:13px;color:#217346;"><span>A</span></div>
<div class="a" style="left:454px;top:198px;width:1px;height:19px;background:#c4c4c4"></div>
<div class="t" style="left:355px;top:208px;width:100px;text-align:center;font-size:13px;color:#262626;"><span>B</span></div>
<div class="a" style="left:542px;top:198px;width:1px;height:19px;background:#c4c4c4"></div>
<div class="t" style="left:455px;top:208px;width:88px;text-align:center;font-size:13px;color:#262626;"><span>C</span></div>
<div class="a" style="left:624px;top:198px;width:1px;height:19px;background:#c4c4c4"></div>
<div class="t" style="left:543px;top:208px;width:82px;text-align:center;font-size:13px;color:#262626;"><span>D</span></div>
<div class="a" style="left:742px;top:198px;width:1px;height:19px;background:#c4c4c4"></div>
<div class="t" style="left:625px;top:208px;width:118px;text-align:center;font-size:13px;color:#262626;"><span>E</span></div>
<div class="a" style="left:837px;top:198px;width:1px;height:19px;background:#c4c4c4"></div>
<div class="t" style="left:743px;top:208px;width:95px;text-align:center;font-size:13px;color:#262626;"><span>F</span></div>
<div class="a" style="left:946px;top:198px;width:1px;height:19px;background:#c4c4c4"></div>
<div class="t" style="left:838px;top:208px;width:109px;text-align:center;font-size:13px;color:#262626;"><span>G</span></div>
<div class="a" style="left:1013px;top:198px;width:1px;height:19px;background:#c4c4c4"></div>
<div class="t" style="left:947px;top:208px;width:67px;text-align:center;font-size:13px;color:#262626;"><span>H</span></div>
<div class="a" style="left:1078px;top:198px;width:1px;height:19px;background:#c4c4c4"></div>
<div class="t" style="left:1014px;top:208px;width:65px;text-align:center;font-size:13px;color:#262626;"><span>I</span></div>
<div class="a" style="left:1142px;top:198px;width:1px;height:19px;background:#c4c4c4"></div>
<div class="t" style="left:1079px;top:208px;width:64px;text-align:center;font-size:13px;color:#262626;"><span>J</span></div>
<div class="a" style="left:1206px;top:198px;width:1px;height:19px;background:#c4c4c4"></div>
<div class="t" style="left:1143px;top:208px;width:64px;text-align:center;font-size:13px;color:#262626;"><span>K</span></div>
<div class="a" style="left:1270px;top:198px;width:1px;height:19px;background:#c4c4c4"></div>
<div class="t" style="left:1207px;top:208px;width:64px;text-align:center;font-size:13px;color:#262626;"><span>L</span></div>
<div class="a" style="left:1334px;top:198px;width:1px;height:19px;background:#c4c4c4"></div>
<div class="t" style="left:1271px;top:208px;width:64px;text-align:center;font-size:13px;color:#262626;"><span>M</span></div>
<div class="a" style="left:1398px;top:198px;width:1px;height:19px;background:#c4c4c4"></div>
<div class="t" style="left:1335px;top:208px;width:64px;text-align:center;font-size:13px;color:#262626;"><span>N</span></div>
<div class="a" style="left:1462px;top:198px;width:1px;height:19px;background:#c4c4c4"></div>
<div class="t" style="left:1399px;top:208px;width:64px;text-align:center;font-size:13px;color:#262626;"><span>O</span></div>
<div class="a" style="left:1526px;top:198px;width:1px;height:19px;background:#c4c4c4"></div>
<div class="t" style="left:1463px;top:208px;width:64px;text-align:center;font-size:13px;color:#262626;"><span>P</span></div>
<div class="a" style="left:1590px;top:198px;width:1px;height:19px;background:#c4c4c4"></div>
<div class="t" style="left:1527px;top:208px;width:64px;text-align:center;font-size:13px;color:#262626;"><span>Q</span></div>
<div class="a" style="left:1654px;top:198px;width:1px;height:19px;background:#c4c4c4"></div>
<div class="t" style="left:1591px;top:208px;width:64px;text-align:center;font-size:13px;color:#262626;"><span>R</span></div>
<div class="a" style="left:1718px;top:198px;width:1px;height:19px;background:#c4c4c4"></div>
<div class="t" style="left:1655px;top:208px;width:64px;text-align:center;font-size:13px;color:#262626;"><span>S</span></div>
<div class="a" style="left:1782px;top:198px;width:1px;height:19px;background:#c4c4c4"></div>
<div class="t" style="left:1719px;top:208px;width:64px;text-align:center;font-size:13px;color:#262626;"><span>T</span></div>
<div class="a" style="left:1846px;top:198px;width:1px;height:19px;background:#c4c4c4"></div>
<div class="t" style="left:1783px;top:208px;width:64px;text-align:center;font-size:13px;color:#262626;"><span>U</span></div>
<div class="t" style="left:1847px;top:208px;width:64px;text-align:center;font-size:13px;color:#262626;"><span>V</span></div>
<div class="a" style="left:25px;top:198px;width:1px;height:19px;background:#c4c4c4"></div>
<div class="a" style="left:1898px;top:217px;width:1px;height:547px;background:#ababab"></div>
<div class="a" style="left:1902px;top:200px;width:15px;height:16px;background:#fff;border:1px solid #ababab;border-bottom-width:2px"></div>
<svg class="a" style="left:1906px;top:205px;" width="7" height="4" viewBox="0 0 7 4"><path d="M0 4h7L3.5 0.5z" fill="#666"/></svg>
<div class="a" style="left:1902px;top:216px;width:15px;height:548px;background:#fff;border:1px solid #ababab;border-bottom:none;border-top:none"></div>
<div class="a" style="left:2px;top:218px;width:23px;height:34px;background:#e6e6e6"></div>
<div class="a" style="left:2px;top:252px;width:23px;height:1px;background:#ababab"></div>
<div class="t" style="left:2px;top:244px;width:23px;text-align:center;font-size:13px;color:#262626;"><span>1</span></div>
<div class="a" style="left:2px;top:253px;width:23px;height:19px;background:#d2d2d2"></div>
<div class="a" style="left:2px;top:272px;width:23px;height:1px;background:#ababab"></div>
<div class="t" style="left:2px;top:264px;width:23px;text-align:center;font-size:13px;color:#217346;"><span>2</span></div>
<div class="a" style="left:2px;top:273px;width:23px;height:19px;background:#d2d2d2"></div>
<div class="a" style="left:2px;top:292px;width:23px;height:1px;background:#ababab"></div>
<div class="t" style="left:2px;top:284px;width:23px;text-align:center;font-size:13px;color:#217346;"><span>3</span></div>
<div class="a" style="left:2px;top:293px;width:23px;height:19px;background:#d2d2d2"></div>
<div class="a" style="left:2px;top:312px;width:23px;height:1px;background:#ababab"></div>
<div class="t" style="left:2px;top:304px;width:23px;text-align:center;font-size:13px;color:#217346;"><span>4</span></div>
<div class="a" style="left:2px;top:313px;width:23px;height:19px;background:#d2d2d2"></div>
<div class="a" style="left:2px;top:332px;width:23px;height:1px;background:#ababab"></div>
<div class="t" style="left:2px;top:324px;width:23px;text-align:center;font-size:13px;color:#217346;"><span>5</span></div>
<div class="a" style="left:2px;top:333px;width:23px;height:19px;background:#d2d2d2"></div>
<div class="a" style="left:2px;top:352px;width:23px;height:1px;background:#ababab"></div>
<div class="t" style="left:2px;top:344px;width:23px;text-align:center;font-size:13px;color:#217346;"><span>6</span></div>
<div class="a" style="left:2px;top:353px;width:23px;height:19px;background:#d2d2d2"></div>
<div class="a" style="left:2px;top:372px;width:23px;height:1px;background:#ababab"></div>
<div class="t" style="left:2px;top:364px;width:23px;text-align:center;font-size:13px;color:#217346;"><span>7</span></div>
<div class="a" style="left:2px;top:373px;width:23px;height:19px;background:#d2d2d2"></div>
<div class="a" style="left:2px;top:392px;width:23px;height:1px;background:#ababab"></div>
<div class="t" style="left:2px;top:384px;width:23px;text-align:center;font-size:13px;color:#217346;"><span>8</span></div>
<div class="a" style="left:2px;top:393px;width:23px;height:19px;background:#d2d2d2"></div>
<div class="a" style="left:2px;top:412px;width:23px;height:1px;background:#ababab"></div>
<div class="t" style="left:2px;top:404px;width:23px;text-align:center;font-size:13px;color:#217346;"><span>9</span></div>
<div class="a" style="left:2px;top:413px;width:23px;height:19px;background:#d2d2d2"></div>
<div class="a" style="left:2px;top:432px;width:23px;height:1px;background:#ababab"></div>
<div class="t" style="left:2px;top:424px;width:23px;text-align:center;font-size:13px;color:#217346;"><span>10</span></div>
<div class="a" style="left:2px;top:433px;width:23px;height:19px;background:#d2d2d2"></div>
<div class="a" style="left:2px;top:452px;width:23px;height:1px;background:#ababab"></div>
<div class="t" style="left:2px;top:444px;width:23px;text-align:center;font-size:13px;color:#217346;"><span>11</span></div>
<div class="a" style="left:2px;top:453px;width:23px;height:19px;background:#e6e6e6"></div>
<div class="a" style="left:2px;top:472px;width:23px;height:1px;background:#ababab"></div>
<div class="t" style="left:2px;top:464px;width:23px;text-align:center;font-size:13px;color:#262626;"><span>12</span></div>
<div class="a" style="left:2px;top:473px;width:23px;height:19px;background:#e6e6e6"></div>
<div class="a" style="left:2px;top:492px;width:23px;height:1px;background:#ababab"></div>
<div class="t" style="left:2px;top:484px;width:23px;text-align:center;font-size:13px;color:#262626;"><span>13</span></div>
<div class="a" style="left:2px;top:493px;width:23px;height:19px;background:#e6e6e6"></div>
<div class="a" style="left:2px;top:512px;width:23px;height:1px;background:#ababab"></div>
<div class="t" style="left:2px;top:504px;width:23px;text-align:center;font-size:13px;color:#262626;"><span>14</span></div>
<div class="a" style="left:2px;top:513px;width:23px;height:19px;background:#e6e6e6"></div>
<div class="a" style="left:2px;top:532px;width:23px;height:1px;background:#ababab"></div>
<div class="t" style="left:2px;top:524px;width:23px;text-align:center;font-size:13px;color:#262626;"><span>15</span></div>
<div class="a" style="left:2px;top:533px;width:23px;height:19px;background:#e6e6e6"></div>
<div class="a" style="left:2px;top:552px;width:23px;height:1px;background:#ababab"></div>
<div class="t" style="left:2px;top:544px;width:23px;text-align:center;font-size:13px;color:#262626;"><span>16</span></div>
<div class="a" style="left:2px;top:553px;width:23px;height:19px;background:#e6e6e6"></div>
<div class="a" style="left:2px;top:572px;width:23px;height:1px;background:#ababab"></div>
<div class="t" style="left:2px;top:564px;width:23px;text-align:center;font-size:13px;color:#262626;"><span>17</span></div>
<div class="a" style="left:2px;top:573px;width:23px;height:19px;background:#e6e6e6"></div>
<div class="a" style="left:2px;top:592px;width:23px;height:1px;background:#ababab"></div>
<div class="t" style="left:2px;top:584px;width:23px;text-align:center;font-size:13px;color:#262626;"><span>18</span></div>
<div class="a" style="left:2px;top:593px;width:23px;height:19px;background:#e6e6e6"></div>
<div class="a" style="left:2px;top:612px;width:23px;height:1px;background:#ababab"></div>
<div class="t" style="left:2px;top:604px;width:23px;text-align:center;font-size:13px;color:#262626;"><span>19</span></div>
<div class="a" style="left:2px;top:613px;width:23px;height:19px;background:#e6e6e6"></div>
<div class="a" style="left:2px;top:632px;width:23px;height:1px;background:#ababab"></div>
<div class="t" style="left:2px;top:624px;width:23px;text-align:center;font-size:13px;color:#262626;"><span>20</span></div>
<div class="a" style="left:2px;top:633px;width:23px;height:19px;background:#e6e6e6"></div>
<div class="a" style="left:2px;top:652px;width:23px;height:1px;background:#ababab"></div>
<div class="t" style="left:2px;top:644px;width:23px;text-align:center;font-size:13px;color:#262626;"><span>21</span></div>
<div class="a" style="left:2px;top:653px;width:23px;height:19px;background:#e6e6e6"></div>
<div class="a" style="left:2px;top:672px;width:23px;height:1px;background:#ababab"></div>
<div class="t" style="left:2px;top:664px;width:23px;text-align:center;font-size:13px;color:#262626;"><span>22</span></div>
<div class="a" style="left:2px;top:673px;width:23px;height:19px;background:#e6e6e6"></div>
<div class="a" style="left:2px;top:692px;width:23px;height:1px;background:#ababab"></div>
<div class="t" style="left:2px;top:684px;width:23px;text-align:center;font-size:13px;color:#262626;"><span>23</span></div>
<div class="a" style="left:2px;top:693px;width:23px;height:19px;background:#e6e6e6"></div>
<div class="a" style="left:2px;top:712px;width:23px;height:1px;background:#ababab"></div>
<div class="t" style="left:2px;top:704px;width:23px;text-align:center;font-size:13px;color:#262626;"><span>24</span></div>
<div class="a" style="left:2px;top:713px;width:23px;height:19px;background:#e6e6e6"></div>
<div class="a" style="left:2px;top:732px;width:23px;height:1px;background:#ababab"></div>
<div class="t" style="left:2px;top:724px;width:23px;text-align:center;font-size:13px;color:#262626;"><span>25</span></div>
<div class="a" style="left:2px;top:733px;width:23px;height:19px;background:#e6e6e6"></div>
<div class="a" style="left:2px;top:752px;width:23px;height:1px;background:#ababab"></div>
<div class="t" style="left:2px;top:744px;width:23px;text-align:center;font-size:13px;color:#262626;"><span>26</span></div>
<div class="a" style="left:2px;top:753px;width:23px;height:19px;background:#e6e6e6"></div>
<div class="a" style="left:2px;top:772px;width:23px;height:1px;background:#ababab"></div>
<div class="t" style="left:2px;top:764px;width:23px;text-align:center;font-size:13px;color:#262626;"><span>27</span></div>
<div class="a" style="left:25px;top:217px;width:1px;height:547px;background:#ababab"></div>
<div class="a" style="left:354px;top:218px;width:1px;height:546px;background:#d4d4d4"></div>
<div class="a" style="left:454px;top:218px;width:1px;height:546px;background:#d4d4d4"></div>
<div class="a" style="left:542px;top:218px;width:1px;height:546px;background:#d4d4d4"></div>
<div class="a" style="left:624px;top:218px;width:1px;height:546px;background:#d4d4d4"></div>
<div class="a" style="left:742px;top:218px;width:1px;height:546px;background:#d4d4d4"></div>
<div class="a" style="left:837px;top:218px;width:1px;height:546px;background:#d4d4d4"></div>
<div class="a" style="left:946px;top:218px;width:1px;height:546px;background:#d4d4d4"></div>
<div class="a" style="left:1013px;top:218px;width:1px;height:546px;background:#d4d4d4"></div>
<div class="a" style="left:1078px;top:218px;width:1px;height:546px;background:#d4d4d4"></div>
<div class="a" style="left:1142px;top:218px;width:1px;height:546px;background:#d4d4d4"></div>
<div class="a" style="left:1206px;top:218px;width:1px;height:546px;background:#d4d4d4"></div>
<div class="a" style="left:1270px;top:218px;width:1px;height:546px;background:#d4d4d4"></div>
<div class="a" style="left:1334px;top:218px;width:1px;height:546px;background:#d4d4d4"></div>
<div class="a" style="left:1398px;top:218px;width:1px;height:546px;background:#d4d4d4"></div>
<div class="a" style="left:1462px;top:218px;width:1px;height:546px;background:#d4d4d4"></div>
<div class="a" style="left:1526px;top:218px;width:1px;height:546px;background:#d4d4d4"></div>
<div class="a" style="left:1590px;top:218px;width:1px;height:546px;background:#d4d4d4"></div>
<div class="a" style="left:1654px;top:218px;width:1px;height:546px;background:#d4d4d4"></div>
<div class="a" style="left:1718px;top:218px;width:1px;height:546px;background:#d4d4d4"></div>
<div class="a" style="left:1782px;top:218px;width:1px;height:546px;background:#d4d4d4"></div>
<div class="a" style="left:1846px;top:218px;width:1px;height:546px;background:#d4d4d4"></div>
<div class="a" style="left:26px;top:252px;width:1872px;height:1px;background:#d4d4d4"></div>
<div class="a" style="left:26px;top:272px;width:1872px;height:1px;background:#d4d4d4"></div>
<div class="a" style="left:26px;top:292px;width:1872px;height:1px;background:#d4d4d4"></div>
<div class="a" style="left:26px;top:312px;width:1872px;height:1px;background:#d4d4d4"></div>
<div class="a" style="left:26px;top:332px;width:1872px;height:1px;background:#d4d4d4"></div>
<div class="a" style="left:26px;top:352px;width:1872px;height:1px;background:#d4d4d4"></div>
<div class="a" style="left:26px;top:372px;width:1872px;height:1px;background:#d4d4d4"></div>
<div class="a" style="left:26px;top:392px;width:1872px;height:1px;background:#d4d4d4"></div>
<div class="a" style="left:26px;top:412px;width:1872px;height:1px;background:#d4d4d4"></div>
<div class="a" style="left:26px;top:432px;width:1872px;height:1px;background:#d4d4d4"></div>
<div class="a" style="left:26px;top:452px;width:1872px;height:1px;background:#d4d4d4"></div>
<div class="a" style="left:26px;top:472px;width:1872px;height:1px;background:#d4d4d4"></div>
<div class="a" style="left:26px;top:492px;width:1872px;height:1px;background:#d4d4d4"></div>
<div class="a" style="left:26px;top:512px;width:1872px;height:1px;background:#d4d4d4"></div>
<div class="a" style="left:26px;top:532px;width:1872px;height:1px;background:#d4d4d4"></div>
<div class="a" style="left:26px;top:552px;width:1872px;height:1px;background:#d4d4d4"></div>
<div class="a" style="left:26px;top:572px;width:1872px;height:1px;background:#d4d4d4"></div>
<div class="a" style="left:26px;top:592px;width:1872px;height:1px;background:#d4d4d4"></div>
<div class="a" style="left:26px;top:612px;width:1872px;height:1px;background:#d4d4d4"></div>
<div class="a" style="left:26px;top:632px;width:1872px;height:1px;background:#d4d4d4"></div>
<div class="a" style="left:26px;top:652px;width:1872px;height:1px;background:#d4d4d4"></div>
<div class="a" style="left:26px;top:672px;width:1872px;height:1px;background:#d4d4d4"></div>
<div class="a" style="left:26px;top:692px;width:1872px;height:1px;background:#d4d4d4"></div>
<div class="a" style="left:26px;top:712px;width:1872px;height:1px;background:#d4d4d4"></div>
<div class="a" style="left:26px;top:732px;width:1872px;height:1px;background:#d4d4d4"></div>
<div class="a" style="left:26px;top:752px;width:1872px;height:1px;background:#d4d4d4"></div>
<div class="a" style="left:27px;top:272px;width:326px;height:179px;background:#c6c6c6"></div>
<div class="a" style="left:27px;top:292px;width:326px;height:1px;background:#ababab"></div>
<div class="a" style="left:27px;top:312px;width:326px;height:1px;background:#ababab"></div>
<div class="a" style="left:27px;top:332px;width:326px;height:1px;background:#ababab"></div>
<div class="a" style="left:27px;top:352px;width:326px;height:1px;background:#ababab"></div>
<div class="a" style="left:27px;top:372px;width:326px;height:1px;background:#ababab"></div>
<div class="a" style="left:27px;top:392px;width:326px;height:1px;background:#ababab"></div>
<div class="a" style="left:27px;top:412px;width:326px;height:1px;background:#ababab"></div>
<div class="a" style="left:27px;top:432px;width:326px;height:1px;background:#ababab"></div>
<div class="a" style="left:27px;top:272px;width:326px;height:1px;background:#ababab"></div>
<div class="a" style="left:24px;top:251px;width:332px;height:2px;background:#217346"></div>
<div class="a" style="left:24px;top:452px;width:332px;height:2px;background:#217346"></div>
<div class="a" style="left:24px;top:251px;width:2px;height:203px;background:#217346"></div>
<div class="a" style="left:354px;top:251px;width:2px;height:203px;background:#217346"></div>
<div class="a" style="left:351px;top:449px;width:7px;height:7px;background:#fff"></div>
<div class="a" style="left:352px;top:450px;width:5px;height:5px;background:#217346"></div>
<div class="a" style="left:353px;top:451px;width:3px;height:3px;background:#217346"></div>
<div class="a" style="left:358px;top:456px;width:24px;height:24px;border:1px solid #b7d3bf"></div>
<svg class="a" style="left:361px;top:459px;" width="18" height="18" viewBox="0 0 18 18"><path d="M7 1L3 8h3l-2 6 5-8H6l2-5z" fill="#f4e2c0"/><rect x="8" y="3" width="8" height="2" fill="#cfcfcf"/><rect x="9" y="6" width="4" height="1.5" fill="#f3b8a8"/><rect x="7" y="9" width="8" height="1.5" fill="#c5d4ea"/><rect x="7" y="12" width="6" height="1.5" fill="#bfd6c5"/><path d="M5.5 11.5v3h10V3.5" fill="none" stroke="#999" stroke-width="0.7"/></svg>
<div class="t" style="left:25.5px;top:237px;width:329.0px;text-align:center;font-size:24px;color:#000;transform:scaleX(1.0330);transform-origin:50% 0;"><span>Keyword</span></div>
<div class="t" style="left:355px;top:237px;width:100px;text-align:center;font-size:24px;color:#000;transform:scaleX(0.8710);transform-origin:50% 0;"><span>SV</span></div>
<div class="t" style="left:455.5px;top:237px;width:88.0px;text-align:center;font-size:24px;color:#000;transform:scaleX(0.8600);transform-origin:50% 0;"><span>CPC</span></div>
<div class="t" style="left:542.5px;top:237px;width:82.0px;text-align:center;font-size:24px;color:#000;transform:scaleX(0.9032);transform-origin:50% 0;"><span>KD</span></div>
<div class="t" style="left:625px;top:237px;width:118px;text-align:center;font-size:24px;color:#000;"><span>PA&gt;30</span></div>
<div class="t" style="left:743px;top:237px;width:95px;text-align:center;font-size:24px;color:#000;"><span>DA&gt;20</span></div>
<div class="t" style="left:838.5px;top:237px;width:109.0px;text-align:center;font-size:24px;color:#000;"><span>AIT</span></div>
<div class="t" style="left:947.5px;top:237px;width:67.0px;text-align:center;font-size:24px;color:#000;"><span>AIU</span></div>
<div class="t" style="left:1014px;top:237px;width:65px;text-align:center;font-size:24px;color:#000;transform:scaleX(0.9000);transform-origin:50% 0;"><span>KGR</span></div>
<div class="t" style="left:355px;top:264px;width:100px;text-align:center;font-size:16px;color:#000;"><span>210</span></div>
<div class="t" style="left:455px;top:264px;width:88px;text-align:center;font-size:16px;color:#000;"><span>$0.72</span></div>
<div class="t" style="left:543px;top:264px;width:82px;text-align:center;font-size:16px;color:#000;"><span>68.24%</span></div>
<div class="t" style="left:625px;top:264px;width:118px;text-align:center;font-size:16px;color:#000;"><span>5</span></div>
<div class="t" style="left:743px;top:264px;width:95px;text-align:center;font-size:16px;color:#000;"><span>9</span></div>
<div class="t" style="left:838px;top:264px;width:109px;text-align:center;font-size:16px;color:#000;"><span>8</span></div>
<div class="t" style="left:947px;top:264px;width:67px;text-align:center;font-size:16px;color:#000;"><span>0</span></div>
<div class="t" style="left:1014px;top:264px;width:65px;text-align:center;font-size:16px;color:#000;"><span>0.0381</span></div>
<div class="t" style="left:355px;top:284px;width:100px;text-align:center;font-size:16px;color:#000;"><span>170</span></div>
<div class="t" style="left:455px;top:284px;width:88px;text-align:center;font-size:16px;color:#000;"><span>$0.51</span></div>
<div class="t" style="left:543px;top:284px;width:82px;text-align:center;font-size:16px;color:#000;"><span>87.26%</span></div>
<div class="t" style="left:625px;top:284px;width:118px;text-align:center;font-size:16px;color:#000;"><span>9</span></div>
<div class="t" style="left:743px;top:284px;width:95px;text-align:center;font-size:16px;color:#000;"><span>10</span></div>
<div class="t" style="left:838px;top:284px;width:109px;text-align:center;font-size:16px;color:#000;"><span>0</span></div>
<div class="t" style="left:947px;top:284px;width:67px;text-align:center;font-size:16px;color:#000;"><span>9,550</span></div>
<div class="t" style="left:1014px;top:284px;width:65px;text-align:center;font-size:16px;color:#000;"><span>0</span></div>
<div class="t" style="left:355px;top:304px;width:100px;text-align:center;font-size:16px;color:#000;"><span>170</span></div>
<div class="t" style="left:455px;top:304px;width:88px;text-align:center;font-size:16px;color:#000;"><span>$5.89</span></div>
<div class="t" style="left:543px;top:304px;width:82px;text-align:center;font-size:16px;color:#000;"><span>79.68%</span></div>
<div class="t" style="left:625px;top:304px;width:118px;text-align:center;font-size:16px;color:#000;"><span>5</span></div>
<div class="t" style="left:743px;top:304px;width:95px;text-align:center;font-size:16px;color:#000;"><span>6</span></div>
<div class="t" style="left:838px;top:304px;width:109px;text-align:center;font-size:16px;color:#000;"><span>8</span></div>
<div class="t" style="left:947px;top:304px;width:67px;text-align:center;font-size:16px;color:#000;"><span>0</span></div>
<div class="t" style="left:1014px;top:304px;width:65px;text-align:center;font-size:16px;color:#000;"><span>0.0471</span></div>
<div class="t" style="left:355px;top:324px;width:100px;text-align:center;font-size:16px;color:#000;"><span>70</span></div>
<div class="t" style="left:455px;top:324px;width:88px;text-align:center;font-size:16px;color:#000;"><span>$0.20</span></div>
<div class="t" style="left:543px;top:324px;width:82px;text-align:center;font-size:16px;color:#000;"><span>58.08%</span></div>
<div class="t" style="left:625px;top:324px;width:118px;text-align:center;font-size:16px;color:#000;"><span>4</span></div>
<div class="t" style="left:743px;top:324px;width:95px;text-align:center;font-size:16px;color:#000;"><span>9</span></div>
<div class="t" style="left:838px;top:324px;width:109px;text-align:center;font-size:16px;color:#000;"><span>3</span></div>
<div class="t" style="left:947px;top:324px;width:67px;text-align:center;font-size:16px;color:#000;"><span>393</span></div>
<div class="t" style="left:1014px;top:324px;width:65px;text-align:center;font-size:16px;color:#000;"><span>0.0429</span></div>
<div class="t" style="left:355px;top:344px;width:100px;text-align:center;font-size:16px;color:#000;"><span>170</span></div>
<div class="t" style="left:455px;top:344px;width:88px;text-align:center;font-size:16px;color:#000;"><span>$2.63</span></div>
<div class="t" style="left:543px;top:344px;width:82px;text-align:center;font-size:16px;color:#000;"><span>77.83%</span></div>
<div class="t" style="left:625px;top:344px;width:118px;text-align:center;font-size:16px;color:#000;"><span>7</span></div>
<div class="t" style="left:743px;top:344px;width:95px;text-align:center;font-size:16px;color:#000;"><span>10</span></div>
<div class="t" style="left:838px;top:344px;width:109px;text-align:center;font-size:16px;color:#000;"><span>7</span></div>
<div class="t" style="left:947px;top:344px;width:67px;text-align:center;font-size:16px;color:#000;"><span>47</span></div>
<div class="t" style="left:1014px;top:344px;width:65px;text-align:center;font-size:16px;color:#000;"><span>0.0412</span></div>
<div class="t" style="left:355px;top:364px;width:100px;text-align:center;font-size:16px;color:#000;"><span>90</span></div>
<div class="t" style="left:455px;top:364px;width:88px;text-align:center;font-size:16px;color:#000;"><span>$0.87</span></div>
<div class="t" style="left:543px;top:364px;width:82px;text-align:center;font-size:16px;color:#000;"><span>85.64%</span></div>
<div class="t" style="left:625px;top:364px;width:118px;text-align:center;font-size:16px;color:#000;"><span>9</span></div>
<div class="t" style="left:743px;top:364px;width:95px;text-align:center;font-size:16px;color:#000;"><span>10</span></div>
<div class="t" style="left:838px;top:364px;width:109px;text-align:center;font-size:16px;color:#000;"><span>6</span></div>
<div class="t" style="left:947px;top:364px;width:67px;text-align:center;font-size:16px;color:#000;"><span>8</span></div>
<div class="t" style="left:1014px;top:364px;width:65px;text-align:center;font-size:16px;color:#000;"><span>0.0667</span></div>
<div class="t" style="left:355px;top:384px;width:100px;text-align:center;font-size:16px;color:#000;"><span>110</span></div>
<div class="t" style="left:455px;top:384px;width:88px;text-align:center;font-size:16px;color:#000;"><span>$0.28</span></div>
<div class="t" style="left:543px;top:384px;width:82px;text-align:center;font-size:16px;color:#000;"><span>53.50%</span></div>
<div class="t" style="left:625px;top:384px;width:118px;text-align:center;font-size:16px;color:#000;"><span>8</span></div>
<div class="t" style="left:743px;top:384px;width:95px;text-align:center;font-size:16px;color:#000;"><span>8</span></div>
<div class="t" style="left:838px;top:384px;width:109px;text-align:center;font-size:16px;color:#000;"><span>26</span></div>
<div class="t" style="left:947px;top:384px;width:67px;text-align:center;font-size:16px;color:#000;"><span>5</span></div>
<div class="t" style="left:1014px;top:384px;width:65px;text-align:center;font-size:16px;color:#000;"><span>0.2364</span></div>
<div class="t" style="left:355px;top:404px;width:100px;text-align:center;font-size:16px;color:#000;"><span>140</span></div>
<div class="t" style="left:455px;top:404px;width:88px;text-align:center;font-size:16px;color:#000;"><span>$6.05</span></div>
<div class="t" style="left:543px;top:404px;width:82px;text-align:center;font-size:16px;color:#000;"><span>81.67%</span></div>
<div class="t" style="left:625px;top:404px;width:118px;text-align:center;font-size:16px;color:#000;"><span>9</span></div>
<div class="t" style="left:743px;top:404px;width:95px;text-align:center;font-size:16px;color:#000;"><span>10</span></div>
<div class="t" style="left:838px;top:404px;width:109px;text-align:center;font-size:16px;color:#000;"><span>135</span></div>
<div class="t" style="left:947px;top:404px;width:67px;text-align:center;font-size:16px;color:#000;"><span>0</span></div>
<div class="t" style="left:1014px;top:404px;width:65px;text-align:center;font-size:16px;color:#000;"><span>0.9643</span></div>
<div class="t" style="left:355px;top:424px;width:100px;text-align:center;font-size:16px;color:#000;"><span>170</span></div>
<div class="t" style="left:455px;top:424px;width:88px;text-align:center;font-size:16px;color:#000;"><span>$0.35</span></div>
<div class="t" style="left:543px;top:424px;width:82px;text-align:center;font-size:16px;color:#000;"><span>92.36%</span></div>
<div class="t" style="left:625px;top:424px;width:118px;text-align:center;font-size:16px;color:#000;"><span>9</span></div>
<div class="t" style="left:743px;top:424px;width:95px;text-align:center;font-size:16px;color:#000;"><span>10</span></div>
<div class="t" style="left:838px;top:424px;width:109px;text-align:center;font-size:16px;color:#000;"><span>13</span></div>
<div class="t" style="left:947px;top:424px;width:67px;text-align:center;font-size:16px;color:#000;"><span>9</span></div>
<div class="t" style="left:1014px;top:424px;width:65px;text-align:center;font-size:16px;color:#000;"><span>0.0765</span></div>
<div class="t" style="left:355px;top:444px;width:100px;text-align:center;font-size:16px;color:#000;"><span>70</span></div>
<div class="t" style="left:455px;top:444px;width:88px;text-align:center;font-size:16px;color:#000;"><span>$2.33</span></div>
<div class="t" style="left:543px;top:444px;width:82px;text-align:center;font-size:16px;color:#000;"><span>59.75%</span></div>
<div class="t" style="left:625px;top:444px;width:118px;text-align:center;font-size:16px;color:#000;"><span>5</span></div>
<div class="t" style="left:743px;top:444px;width:95px;text-align:center;font-size:16px;color:#000;"><span>6</span></div>
<div class="t" style="left:838px;top:444px;width:109px;text-align:center;font-size:16px;color:#000;"><span>8</span></div>
<div class="t" style="left:947px;top:444px;width:67px;text-align:center;font-size:16px;color:#000;"><span>6</span></div>
<div class="t" style="left:1014px;top:444px;width:65px;text-align:center;font-size:16px;color:#000;"><span>0.1143</span></div>
<div class="a" style="left:0px;top:0px;width:2px;height:764px;background:#2b2b2b;z-index:100"></div>
</body></html>
